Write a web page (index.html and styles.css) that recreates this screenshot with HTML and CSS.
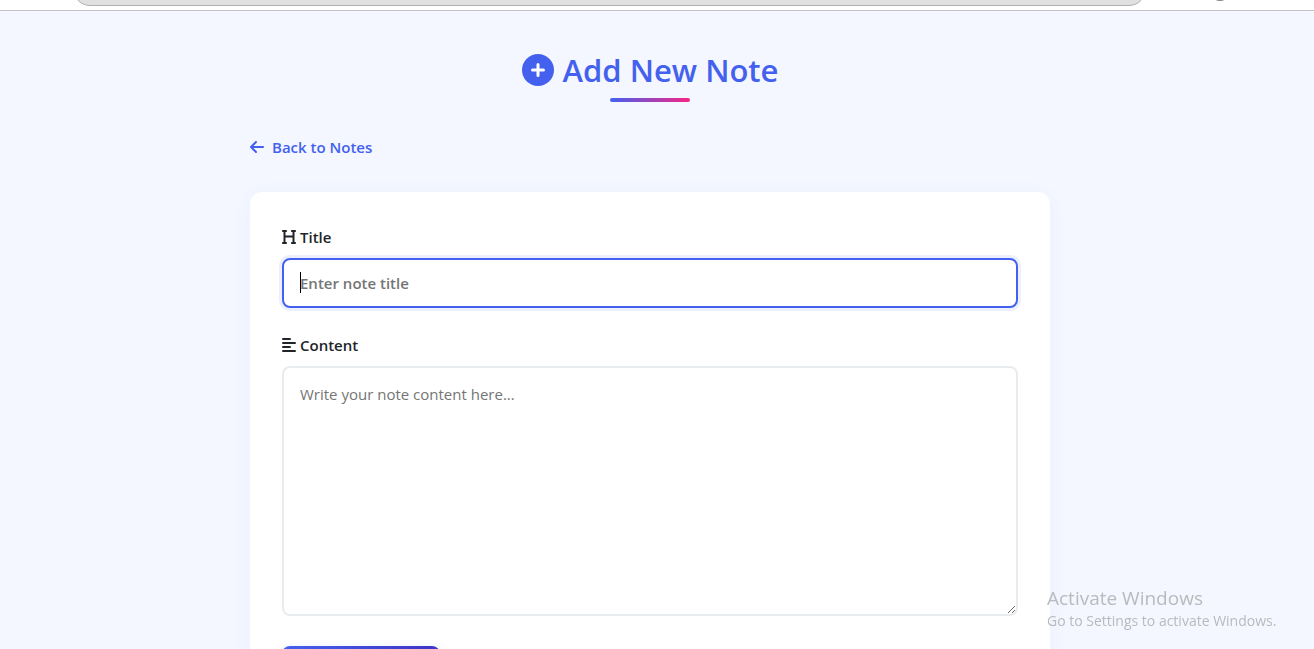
FILE: index.html
```html
<!DOCTYPE html>
<html lang="en">
<head>
<meta charset="utf-8">
<title>Add New Note</title>
<link rel="stylesheet" href="styles.css">
</head>
<body>
<div class="browser-bar">
  <div class="address"></div>
  <div class="browser-actions"><span class="profile"></span></div>
</div>
<div class="page">
  <main class="container">
    <h1 class="heading">
      <svg class="heading-icon" viewBox="0 0 512 512" aria-hidden="true"><circle cx="256" cy="256" r="256" fill="currentColor"/><path d="M168 256H344M256 168V344" stroke="#fff" stroke-width="48" stroke-linecap="round"/></svg>
      <span>Add New Note</span>
    </h1>
    <a class="back" href="#notes">
      <svg class="icon" viewBox="0 0 448 512" aria-hidden="true"><path fill="currentColor" d="M9.4 233.4c-12.5 12.5-12.5 32.8 0 45.3l160 160c12.5 12.5 32.8 12.5 45.3 0s12.5-32.8 0-45.3L109.2 288 416 288c17.7 0 32-14.3 32-32s-14.3-32-32-32l-306.7 0L214.6 118.6c12.5-12.5 12.5-32.8 0-45.3s-32.8-12.5-45.3 0l-160 160z"/></svg>
      Back to Notes
    </a>
    <form class="card">
      <div class="field">
        <label class="label" for="title">
          <svg class="icon" viewBox="0 0 448 512" aria-hidden="true"><path fill="currentColor" d="M0 64C0 46.3 14.3 32 32 32H80h48c17.7 0 32 14.3 32 32s-14.3 32-32 32H112V208H336V96H320c-17.7 0-32-14.3-32-32s14.3-32 32-32h48 48c17.7 0 32 14.3 32 32s-14.3 32-32 32H400V240 416h16c17.7 0 32 14.3 32 32s-14.3 32-32 32H368 320c-17.7 0-32-14.3-32-32s14.3-32 32-32h16V272H112V416h16c17.7 0 32 14.3 32 32s-14.3 32-32 32H80 32c-17.7 0-32-14.3-32-32s14.3-32 32-32H48V240 96H32C14.3 96 0 81.7 0 64z"/></svg>
          Title
        </label>
        <div class="input-wrap">
          <input class="control title-input" id="title" type="text" placeholder="Enter note title">
          <span class="caret"></span>
        </div>
      </div>
      <div class="field">
        <label class="label" for="content">
          <svg class="icon" viewBox="0 0 448 512" aria-hidden="true"><path d="M32 64H256M32 192H416M32 320H256M32 448H416" stroke="currentColor" stroke-width="64" stroke-linecap="round"/></svg>
          Content
        </label>
        <textarea class="control content-input" id="content" placeholder="Write your note content here..."></textarea>
      </div>
      <button class="save" type="submit" aria-label="Save"></button>
    </form>
  </main>
</div>
<aside class="watermark">
  <div class="watermark-title">Activate Windows</div>
  <div class="watermark-text">Go to Settings to activate Windows.</div>
</aside>
</body>
</html>
```
FILE: styles.css
```css
* {
  box-sizing: border-box;
}

body {
  display: flex;
  flex-direction: column;
  height: 100vh;
  margin: 0;
  background: #f4f7ff;
  color: #212529;
  font: 16px/24px "Segoe UI", "Open Sans", "Noto Sans", sans-serif;
}

.browser-bar {
  display: flex;
  flex: none;
  justify-content: space-between;
  height: 11px;
  padding-left: 73px;
  overflow: hidden;
  background: #fff;
  border-bottom: 1px solid #c2c2c4;
}

.address {
  flex: 1;
  height: 34px;
  margin-top: -28px;
  background: #e0e0e0;
  border: 1px solid #b0b0b0;
  border-radius: 17px;
}

.browser-actions {
  width: 168px;
  padding-left: 64px;
}

.profile {
  display: block;
  width: 20px;
  height: 20px;
  margin-top: -19px;
  background: #857f80;
  border-radius: 50%;
}

.page {
  flex: 1;
  min-height: 0;
  padding-right: 14px;
  overflow: hidden;
}

.container {
  max-width: 832px;
  margin: 0 auto;
  padding: 36px 16px 0;
}

.heading {
  display: flex;
  align-items: center;
  justify-content: center;
  gap: 9px;
  position: relative;
  margin: 0 0 33px;
  padding-bottom: 9px;
  color: #4361ee;
  font-size: 31px;
  font-weight: 600;
  line-height: 46px;
}

.heading::after {
  content: "";
  position: absolute;
  bottom: 0;
  left: 50%;
  width: 80px;
  height: 4px;
  margin-left: -40px;
  border-radius: 2px;
  background: linear-gradient(90deg, #4361ee, #f72585);
}

.heading-icon {
  width: 32px;
  height: 32px;
}

.icon {
  flex: none;
  width: 14px;
  height: 16px;
  fill: none;
}

.back {
  display: inline-flex;
  align-items: center;
  gap: 8px;
  margin-bottom: 33px;
  color: #4361ee;
  font-size: 15px;
  font-weight: 600;
  text-decoration: none;
}

.card {
  padding: 33px 32px;
  background: #fff;
  border-radius: 12px;
  box-shadow: 0 4px 20px rgba(67, 97, 238, 0.05);
}

.field {
  margin-bottom: 25px;
}

.label {
  display: flex;
  align-items: center;
  gap: 4px;
  margin-bottom: 9px;
  font-size: 15px;
  font-weight: 600;
}

.input-wrap {
  position: relative;
}

.control {
  display: block;
  width: 100%;
  padding: 14px 16px;
  background: #fff;
  border: 2px solid #e9ecef;
  border-radius: 8px;
  outline: 0;
  color: #212529;
  font: inherit;
  font-size: 15px;
}

.control::placeholder {
  color: #757575;
  opacity: 1;
}

.title-input {
  height: 50px;
  border-color: #4361ee;
  box-shadow: 0 0 0 3px rgba(67, 97, 238, 0.1);
  font-weight: 600;
}

.caret {
  position: absolute;
  top: 14px;
  left: 18px;
  width: 1px;
  height: 21px;
  background: #000;
}

.content-input {
  height: 250px;
  resize: vertical;
}

.save {
  display: block;
  width: 158px;
  height: 48px;
  margin-top: 30px;
  border: 0;
  border-radius: 8px;
  background: linear-gradient(135deg, #4361ee, #3f37c9 70%);
  box-shadow: 0 4px 12px rgba(67, 97, 238, 0.2);
}

.watermark {
  position: fixed;
  right: 31px;
  bottom: 17px;
  width: 236px;
  color: #bababc;
  white-space: nowrap;
}

.watermark-title {
  font-size: 19px;
  line-height: 24px;
}

.watermark-text {
  font-size: 14px;
  line-height: 22px;
}
```
